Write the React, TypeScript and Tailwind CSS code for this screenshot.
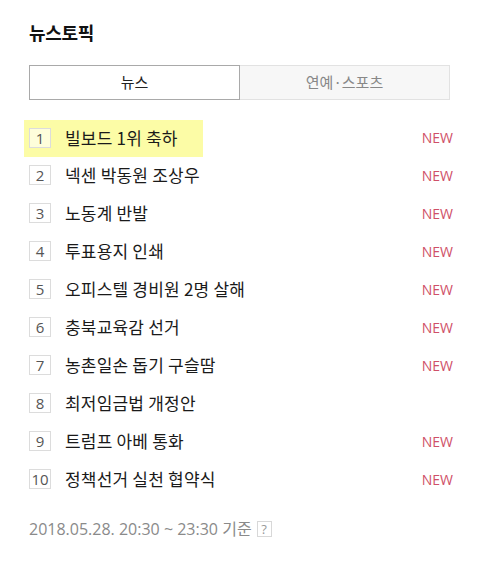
import React from 'react';

const topics = [
    {title: '빌보드 1위 축하', isNew: true},
    {title: '넥센 박동원 조상우', isNew: true},
    {title: '노동계 반발', isNew: true},
    {title: '투표용지 인쇄', isNew: true},
    {title: '오피스텔 경비원 2명 살해', isNew: true},
    {title: '충북교육감 선거', isNew: true},
    {title: '농촌일손 돕기 구슬땀', isNew: true},
    {title: '최저임금법 개정안', isNew: false},
    {title: '트럼프 아베 통화', isNew: true},
    {title: '정책선거 실천 협약식', isNew: true},
];

const font = {fontFamily: '"Noto Sans CJK KR", "Noto Sans", sans-serif'};
const latin = {fontFamily: '"Open Sans", "Noto Sans CJK KR", sans-serif'};

const App = () => {
    return (
        <div className="w-[500px] h-[561px] bg-white pl-[29px] pt-[20px]" style={font}>
            <h2 className="h-6 text-[18px] leading-6 font-bold text-[#111] tracking-[-0.3px]">뉴스토픽</h2>

            <div className="mt-[21px] flex w-[421px] h-[35px] text-[15px]">
                <div className="flex-1 flex items-center justify-center border border-[#a9a9a9] bg-white text-[#222]">뉴스</div>
                <div className="flex-1 flex items-center justify-center border border-l-0 border-[#e2e2e2] bg-[#f7f7f7] text-[#888]">연예·스포츠</div>
            </div>

            <ul className="mt-[18px] w-[424px]">
                {topics.map((t, i) => (
                    <li key={i} className="h-[38px] flex items-center justify-between">
                        <div className={i === 0
                            ? "flex items-center -ml-[5px] pl-[5px] w-[179px] h-[37px] mt-[2px] bg-[#fcfca6]"
                            : "flex items-center"}>
                            <span className="w-[22px] h-[20px] flex items-center justify-center border border-[#dcdcdc] bg-white/60 text-[15px] leading-none text-[#555]" style={latin}>
                                {i + 1}
                            </span>
                            <span className="ml-[14px] text-[17px] text-[#1a1a1a] tracking-[0.2px]">{t.title}</span>
                        </div>
                        {t.isNew && <span className="text-[14px] text-[#cf5068]" style={latin}>NEW</span>}
                    </li>
                ))}
            </ul>

            <div className="mt-[21px] h-5 flex items-center text-[16px] text-[#8a8a8a]" style={latin}>
                <span>2018.05.28. 20:30 ~ 23:30 기준</span>
                <span className="ml-[5px] w-[15px] h-[16px] flex items-center justify-center border border-[#d8d8d8] text-[13px] leading-none text-[#999]">?</span>
            </div>
        </div>
    );
}

export default App;
